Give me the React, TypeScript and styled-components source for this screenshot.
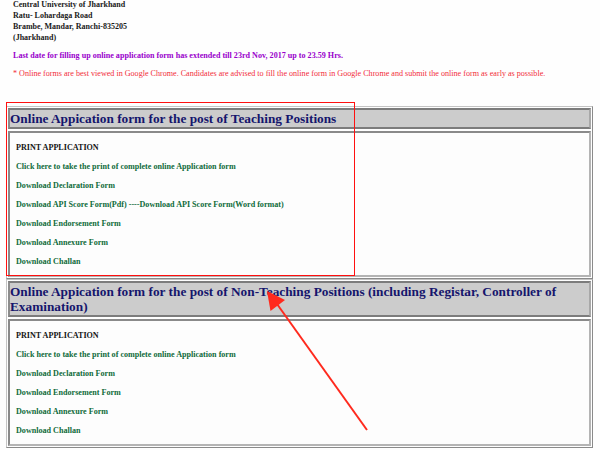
import styled, { createGlobalStyle } from 'styled-components'

const GlobalStyle = createGlobalStyle`
  html, body {
    margin: 0;
    padding: 0;
    background: #fefefe;
    overflow: hidden;
  }
  body {
    font-family: "Liberation Serif", "Times New Roman", serif;
  }
`

const Page = styled.div`
  position: relative;
  width: 600px;
  height: 450px;
  overflow: hidden;
`

const Intro = styled.div`
  margin-top: -1px;
  padding-left: 13px;
`

const AddressLine = styled.div`
  font-size: 8px;
  font-weight: bold;
  line-height: 11px;
  color: #1a1a1a;
`

const Notice = styled.p<{ $tone: 'purple' | 'red' }>`
  margin: 7px 0 0;
  font-size: ${({ $tone }) => ($tone === 'purple' ? '8.1px' : '8.1px')};
  line-height: 11px;
  font-weight: ${({ $tone }) => ($tone === 'purple' ? 'bold' : 'normal')};
  color: ${({ $tone }) => ($tone === 'purple' ? '#9900cc' : '#f22c3a')};
`

const Table = styled.div<{ $top: number }>`
  margin: ${({ $top }) => `${$top}px`} 7px 0 6px;
  display: flex;
  flex-direction: column;
  gap: 2px;
  padding: 1px;
  border: 1px solid;
  border-color: #c4c4c4 #8a8a8a #8a8a8a #c4c4c4;
`

const HeaderCell = styled.div`
  background: #cccccc;
  border: 2px solid;
  border-color: #7c7c7c #a8a8a8 #7c7c7c #8c8c8c;
`

const Title = styled.h2`
  margin: 0;
  padding: 1px 2px 1px 0;
  font-size: 13.3px;
  line-height: 15px;
  font-weight: bold;
  color: #15156c;
`

const BodyCell = styled.div`
  background: #fdfdfd;
  border: 2px solid;
  border-color: #8a8a8a #b4b4b4 #b4b4b4 #8a8a8a;
  padding: 5px 6px 4px;
`

const Row = styled.div<{ $head?: boolean }>`
  font-size: 8.1px;
  line-height: 19px;
  font-weight: bold;
  color: ${({ $head }) => ($head ? '#141414' : '#0f6b3a')};
  white-space: nowrap;
`

const Link = styled.a`
  color: inherit;
  text-decoration: none;
`

const Highlight = styled.div`
  position: absolute;
  left: 6px;
  top: 102px;
  width: 347px;
  height: 172px;
  border: 1.5px solid #ff1010;
`

const ArrowLayer = styled.svg`
  position: absolute;
  left: 0;
  top: 0;
`

const teachingLinks = [
  'Click here to take the print of complete online Application form',
  'Download Declaration Form',
  'API',
  'Download Endorsement Form',
  'Download Annexure Form',
  'Download Challan',
]

const nonTeachingLinks = [
  'Click here to take the print of complete online Application form',
  'Download Declaration Form',
  'Download Endorsement Form',
  'Download Annexure Form',
  'Download Challan',
]

const FormTable = ({ title, links, top }: { title: string; links: string[]; top: number }) => (
  <Table $top={top}>
    <HeaderCell>
      <Title>{title}</Title>
    </HeaderCell>
    <BodyCell>
      <Row $head>PRINT APPLICATION</Row>
      {links.map((label) =>
        label === 'API' ? (
          <Row key={label}>
            <Link href="#">Download API Score Form(Pdf)</Link> ----
            <Link href="#">Download API Score Form(Word format)</Link>
          </Row>
        ) : (
          <Row key={label}>
            <Link href="#">{label}</Link>
          </Row>
        ),
      )}
    </BodyCell>
  </Table>
)

const App = () => (
  <Page>
    <GlobalStyle />
    <Intro>
      <AddressLine>Central University of Jharkhand</AddressLine>
      <AddressLine>Ratu- Lohardaga Road</AddressLine>
      <AddressLine>Brambe, Mandar, Ranchi-835205</AddressLine>
      <AddressLine>(Jharkhand)</AddressLine>
      <Notice $tone="purple">
        Last date for filling up online application form has extended till 23rd Nov, 2017 up to 23.59 Hrs.
      </Notice>
      <Notice $tone="red">
        * Online forms are best viewed in Google Chrome. Candidates are advised to fill the online form in
        Google Chrome and submit the online form as early as possible.
      </Notice>
    </Intro>
    <FormTable top={27} title="Online Appication form for the post of Teaching Positions" links={teachingLinks} />
    <FormTable
      top={0}
      title="Online Appication form for the post of Non-Teaching Positions (including Registar, Controller of Examination)"
      links={nonTeachingLinks}
    />
    <Highlight />
    <ArrowLayer width="600" height="450" viewBox="0 0 600 450">
      <line x1="277" y1="304" x2="367" y2="430" stroke="#ff2a1e" strokeWidth="2" />
      <polygon points="267,291 285,300 270.5,311" fill="#ff2a1e" />
    </ArrowLayer>
  </Page>
)

export default App
